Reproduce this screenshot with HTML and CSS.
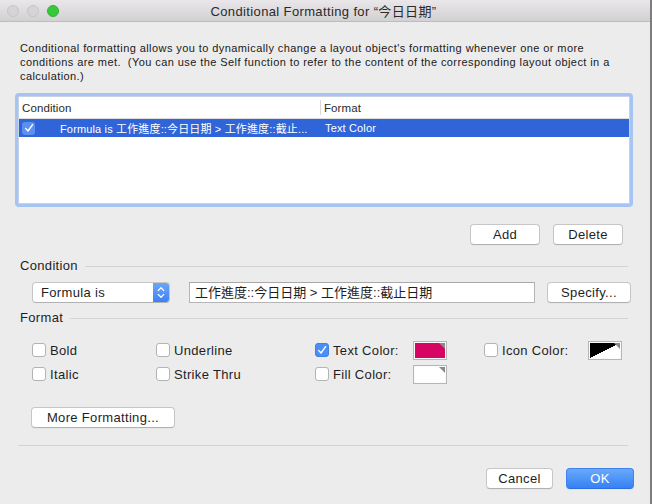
FILE: index.html
```html
<!DOCTYPE html>
<html>
<head>
<meta charset="utf-8">
<link rel="stylesheet" href="styles.css">
</head>
<body>
<div class="window">
  <div class="titlebar">
    <div class="lights">
      <span class="light gray"></span>
      <span class="light gray"></span>
      <span class="light green"></span>
    </div>
    <div class="title">Conditional Formatting for “今日日期”</div>
  </div>

  <div class="content">
    <p class="desc">Conditional formatting allows you to dynamically change a layout object's formatting whenever one or more conditions are met.&nbsp; (You can use the Self function to refer to the content of the corresponding layout object in a calculation.)</p>

    <div class="table">
      <div class="table-inner">
        <div class="thead">
          <div class="th th-cond">Condition</div>
          <div class="th th-fmt">Format</div>
        </div>
        <div class="row selected">
          <div class="cell cell-cond">
            <span class="row-check">
              <svg width="10" height="10" viewBox="0 0 10 10"><path d="M1.6 5.4 L4 8 L8.6 1.6" fill="none" stroke="#fff" stroke-width="1.4" stroke-linecap="round" stroke-linejoin="round"/></svg>
            </span>
            <span class="row-text">Formula is 工作進度::今日日期 &gt; 工作進度::截止...</span>
          </div>
          <div class="cell cell-fmt">Text Color</div>
        </div>
      </div>
    </div>

    <div class="btnrow">
      <button class="btn btn-add">Add</button>
      <button class="btn btn-del">Delete</button>
    </div>

    <div class="section">
      <span class="section-label">Condition</span>
      <span class="section-line"></span>
    </div>

    <div class="cond-row">
      <div class="popup">
        <span class="popup-text">Formula is</span>
        <span class="popup-arrows">
          <svg width="16" height="19" viewBox="0 0 16 19"><path d="M5.2 7.6 L8 4.8 L10.8 7.6" fill="none" stroke="#fff" stroke-width="1.3" stroke-linecap="round" stroke-linejoin="round"/><path d="M5.2 11.4 L8 14.2 L10.8 11.4" fill="none" stroke="#fff" stroke-width="1.3" stroke-linecap="round" stroke-linejoin="round"/></svg>
        </span>
      </div>
      <div class="field">工作進度::今日日期 &gt; 工作進度::截止日期</div>
      <button class="btn btn-specify">Specify...</button>
    </div>

    <div class="section section-fmt">
      <span class="section-label">Format</span>
      <span class="section-line"></span>
    </div>

    <div class="fmt-grid">
      <label class="opt c1"><span class="cb"></span>Bold</label>
      <label class="opt c2"><span class="cb"></span>Underline</label>
      <label class="opt c3"><span class="cb checked"><svg width="10" height="10" viewBox="0 0 10 10"><path d="M1.6 5.4 L4 8 L8.6 1.6" fill="none" stroke="#fff" stroke-width="1.4" stroke-linecap="round" stroke-linejoin="round"/></svg></span><span class="opt-label">Text Color:</span><span class="well"><span class="well-fill magenta"></span></span></label>
      <label class="opt c4"><span class="cb"></span><span class="opt-label opt-label-icon">Icon Color:</span><span class="well"><span class="well-fill split"></span></span></label>

      <label class="opt c1"><span class="cb"></span>Italic</label>
      <label class="opt c2"><span class="cb"></span>Strike Thru</label>
      <label class="opt c3"><span class="cb"></span><span class="opt-label">Fill Color:</span><span class="well"><span class="well-fill white"></span></span></label>
      <span class="opt c4"></span>
    </div>

    <div class="more-row">
      <button class="btn btn-more">More Formatting...</button>
    </div>

    <div class="sep"></div>

    <div class="footer">
      <button class="btn btn-cancel">Cancel</button>
      <button class="btn btn-ok">OK</button>
    </div>
  </div>
</div>
</body>
</html>
```

FILE: styles.css
```css
* { box-sizing: border-box; }

html, body {
  margin: 0;
  padding: 0;
  background: #ececec;
}

body {
  font-family: "Liberation Sans", "Noto Sans CJK TC", sans-serif;
  color: #1e1e1e;
  font-size: 13px;
  letter-spacing: 0.33px;
  width: 652px;
  height: 504px;
  overflow: hidden;
}

.window {
  width: 652px;
  height: 504px;
  background: #ececec;
  border-right: 2px solid #7d7d7d;
  display: flex;
  flex-direction: column;
}

.titlebar {
  height: 22px;
  flex: none;
  background: linear-gradient(#e9e7e9, #d2d0d2);
  border-bottom: 1px solid #bebcbe;
  display: flex;
  align-items: center;
}

.lights {
  display: flex;
  gap: 8px;
  padding-left: 7px;
}

.light {
  width: 12px;
  height: 12px;
  border-radius: 50%;
  display: block;
}

.light.gray {
  background: #d6d4d6;
  border: 1px solid #c6c4c6;
}

.light.green {
  background: #37c83c;
  border: 1px solid #2fb233;
}

.title {
  flex: 1;
  text-align: center;
  font-size: 13px;
  letter-spacing: 0.37px;
  color: #2a2a2a;
  margin-left: -64px;
  margin-top: -1px;
  padding-left: 2px;
}

.content {
  flex: 1;
  display: flex;
  flex-direction: column;
}

.desc {
  margin: 19px 18px 0 20px;
  font-size: 11px;
  letter-spacing: 0.42px;
  line-height: 14px;
  color: #1a1a1a;
  max-width: 600px;
}

.table {
  margin: 10px 0 0 15px;
  width: 618px;
  height: 114px;
  border: 3px solid #a5c3f3;
  border-radius: 4px;
}

.table-inner {
  height: 100%;
  background: #fff;
  border: 1px solid #c7d3e4;
}

.thead {
  display: flex;
  height: 22px;
  border-bottom: 1px solid #dcdcdc;
  font-size: 11.5px;
  letter-spacing: 0.1px;
  color: #2b2b2b;
}

.th {
  display: flex;
  align-items: center;
}

.th-cond {
  width: 302px;
  padding-left: 3px;
  border-right: 1px solid #d8d8d8;
  margin: 3px 0;
}

.th-fmt {
  padding-left: 3px;
}

.row {
  display: flex;
  height: 18px;
  align-items: center;
  font-size: 11px;
  letter-spacing: 0.15px;
}

.row.selected {
  background: #2f65d8;
  color: #fff;
}

.cell-cond {
  width: 303px;
  display: flex;
  align-items: center;
  padding-left: 3px;
}

.row-check {
  width: 13px;
  height: 13px;
  border-radius: 3px;
  background: #5d8ff0;
  display: flex;
  align-items: center;
  justify-content: center;
}

.row-text {
  margin-left: 25px;
  white-space: nowrap;
}

.cell-fmt {
  padding-left: 3px;
}

.btn {
  font-family: "Liberation Sans", "Noto Sans CJK TC", sans-serif;
  font-size: 13px;
  letter-spacing: 0.33px;
  color: #1e1e1e;
  background: #fff;
  border: 1px solid #c6c6c6;
  border-bottom-color: #b1b1b1;
  border-radius: 4px;
  height: 21px;
  padding: 0;
  line-height: 19px;
  box-shadow: 0 0.5px 0 rgba(0,0,0,0.05);
}

.btnrow {
  display: flex;
  justify-content: flex-end;
  gap: 13px;
  padding-right: 27px;
  margin-top: 17px;
}

.btn-add, .btn-del {
  width: 70px;
}

.section {
  display: flex;
  align-items: center;
  padding: 0 22px 0 20px;
  margin-top: 12px;
  height: 16px;
}

.section-label {
  font-size: 13px;
  color: #1e1e1e;
}

.section-line {
  flex: 1;
  height: 1px;
  background: #d3d3d3;
  margin-left: 7px;
  margin-top: 3px;
}

.cond-row {
  display: flex;
  align-items: center;
  margin-top: 9px;
  padding-left: 32px;
  height: 21px;
}

.popup {
  width: 138px;
  height: 21px;
  background: #fff;
  border: 1px solid #c6c6c6;
  border-bottom-color: #b1b1b1;
  border-radius: 4px;
  display: flex;
  align-items: center;
  overflow: hidden;
}

.popup-text {
  flex: 1;
  padding-left: 8px;
  font-size: 13px;
}

.popup-arrows {
  width: 16px;
  height: 19px;
  background: linear-gradient(#6aa7f8, #3d82f5);
  display: flex;
}

.field {
  width: 346px;
  height: 21px;
  margin-left: 19px;
  background: #fff;
  border: 1px solid #b5b5b5;
  border-top-color: #a8a8a8;
  font-size: 13px;
  letter-spacing: 0;
  line-height: 19px;
  padding-left: 5px;
  white-space: nowrap;
}

.btn-specify {
  width: 84px;
  margin-left: 12px;
}

.section-fmt {
  margin-top: 6px;
}

.fmt-grid {
  display: grid;
  grid-template-columns: 124px 159px 169px 1fr;
  grid-auto-rows: 24px;
  padding-left: 32px;
  margin-top: 13px;
}

.opt {
  display: flex;
  align-items: center;
  font-size: 13px;
  color: #1e1e1e;
}

.cb {
  width: 14px;
  height: 14px;
  border: 1px solid #b3b3b3;
  border-radius: 3px;
  background: #fff;
  margin-right: 4px;
  flex: none;
  display: flex;
  align-items: center;
  justify-content: center;
}

.cb.checked {
  background: #4b8ff6;
  border-color: #3f80ea;
}

.opt-label {
  width: 80px;
}

.opt-label-icon {
  width: 86px;
}

.well {
  width: 34px;
  height: 19px;
  border: 1px solid #b6b6b6;
  background: #fafafa;
  padding: 1px;
  display: flex;
  position: relative;
}

.well::after {
  content: "";
  position: absolute;
  right: 1px;
  top: 1px;
  width: 0;
  height: 0;
  border-top: 6px solid #8a8a8a;
  border-left: 6px solid transparent;
}

.well-fill {
  flex: 1;
}

.well-fill.magenta { background: #d60564; }
.well-fill.white { background: #fff; }
.well-fill.split { background: linear-gradient(to bottom right, #000 50%, #fff 50%); }

.more-row {
  margin-top: 21px;
  padding-left: 31px;
}

.btn-more {
  width: 144px;
}

.sep {
  height: 1px;
  background: #d3d3d3;
  margin: 17px 22px 0 18px;
}

.footer {
  display: flex;
  justify-content: flex-end;
  gap: 13px;
  padding-right: 16px;
  margin-top: 22px;
}

.btn-cancel {
  width: 67px;
}

.btn-ok {
  width: 68px;
  color: #fff;
  border: 1px solid #3c82f0;
  border-bottom-color: #2d6fe0;
  background: linear-gradient(#69a9fa, #3582f6);
}
```
